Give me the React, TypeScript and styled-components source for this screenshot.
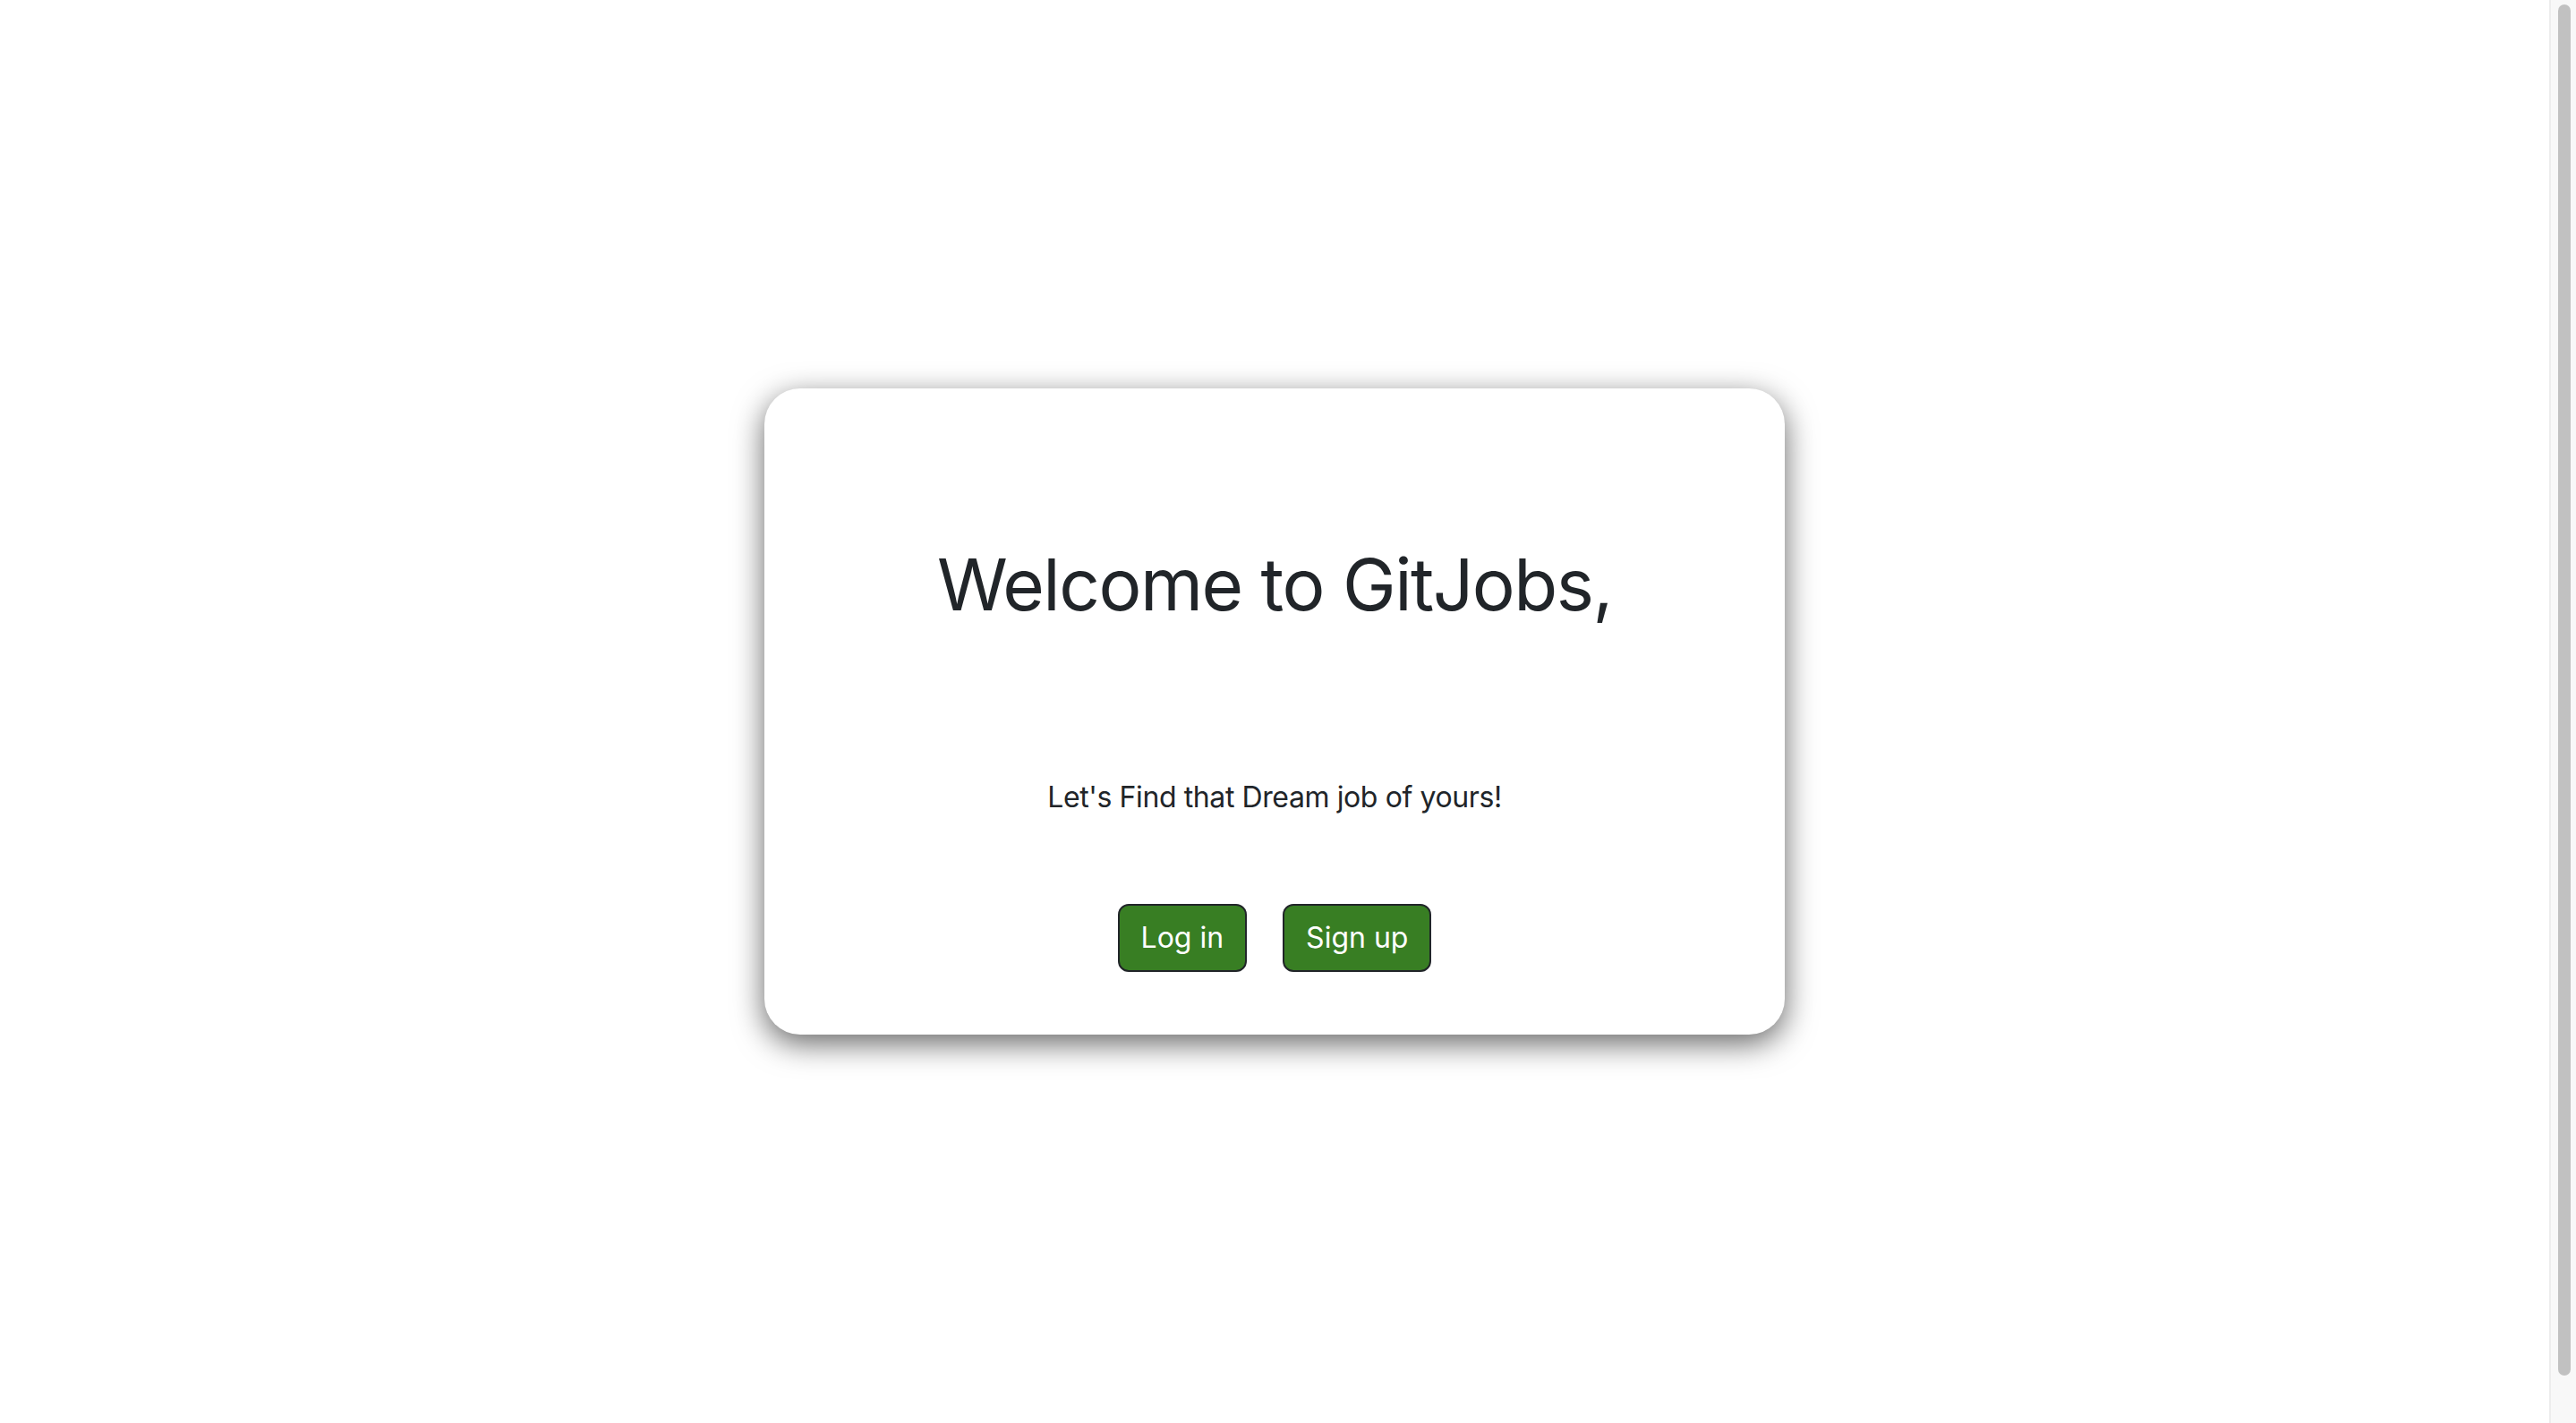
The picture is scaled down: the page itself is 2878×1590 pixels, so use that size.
import React from "react";
import styled, { createGlobalStyle } from "styled-components";

const GlobalStyle = createGlobalStyle`
  body {
    margin: 0;
    background-color: #ffffff;
    font-family: Inter, "Noto Sans", sans-serif;
    color: #212529;
    overflow: hidden;
  }
`;

const Viewport = styled.div`
  display: flex;
  height: 100vh;
`;

const Page = styled.main`
  flex: 1;
  display: flex;
  align-items: center;
  justify-content: center;
`;

const ScrollTrack = styled.div`
  box-sizing: border-box;
  display: flex;
  width: 30px;
  padding: 5px 6px 53px 8px;
  background-color: #f8f8f8;
  border-left: 2px solid #ededed;
`;

const ScrollThumb = styled.div`
  flex: 1;
  background-color: #c1c1c1;
  border-radius: 8px;
`;

const Card = styled.section`
  box-sizing: border-box;
  display: flex;
  flex-direction: column;
  align-items: center;
  width: 1140px;
  height: 722px;
  padding: 171px 0 0;
  background-color: #ffffff;
  border-radius: 40px;
  box-shadow: 0 10px 34px rgba(0, 0, 0, 0.6);
`;

const Title = styled.h1`
  margin: 0;
  font-size: 80px;
  font-weight: 400;
  line-height: 96px;
  letter-spacing: -1.5px;
  color: #212529;
`;

const Tagline = styled.p`
  margin: 166px 0 0;
  font-size: 32px;
  line-height: 48px;
  letter-spacing: -0.4px;
  color: #212529;
`;

const ButtonRow = styled.div`
  display: flex;
  gap: 40px;
  margin-top: 95px;
`;

const Button = styled.button`
  box-sizing: border-box;
  height: 76px;
  padding: 12px 24px;
  font-family: inherit;
  font-size: 32px;
  line-height: 48px;
  color: #ffffff;
  background-color: #387e23;
  border: 2px solid #212529;
  border-radius: 12px;
  cursor: pointer;
`;

function App() {
  return (
    <>
      <GlobalStyle />
      <Viewport>
        <Page>
          <Card>
            <Title>Welcome to GitJobs,</Title>
            <Tagline>Let's Find that Dream job of yours!</Tagline>
            <ButtonRow>
              <Button type="button">Log in</Button>
              <Button type="button">Sign up</Button>
            </ButtonRow>
          </Card>
        </Page>
        <ScrollTrack>
          <ScrollThumb />
        </ScrollTrack>
      </Viewport>
    </>
  );
}

export default App;
